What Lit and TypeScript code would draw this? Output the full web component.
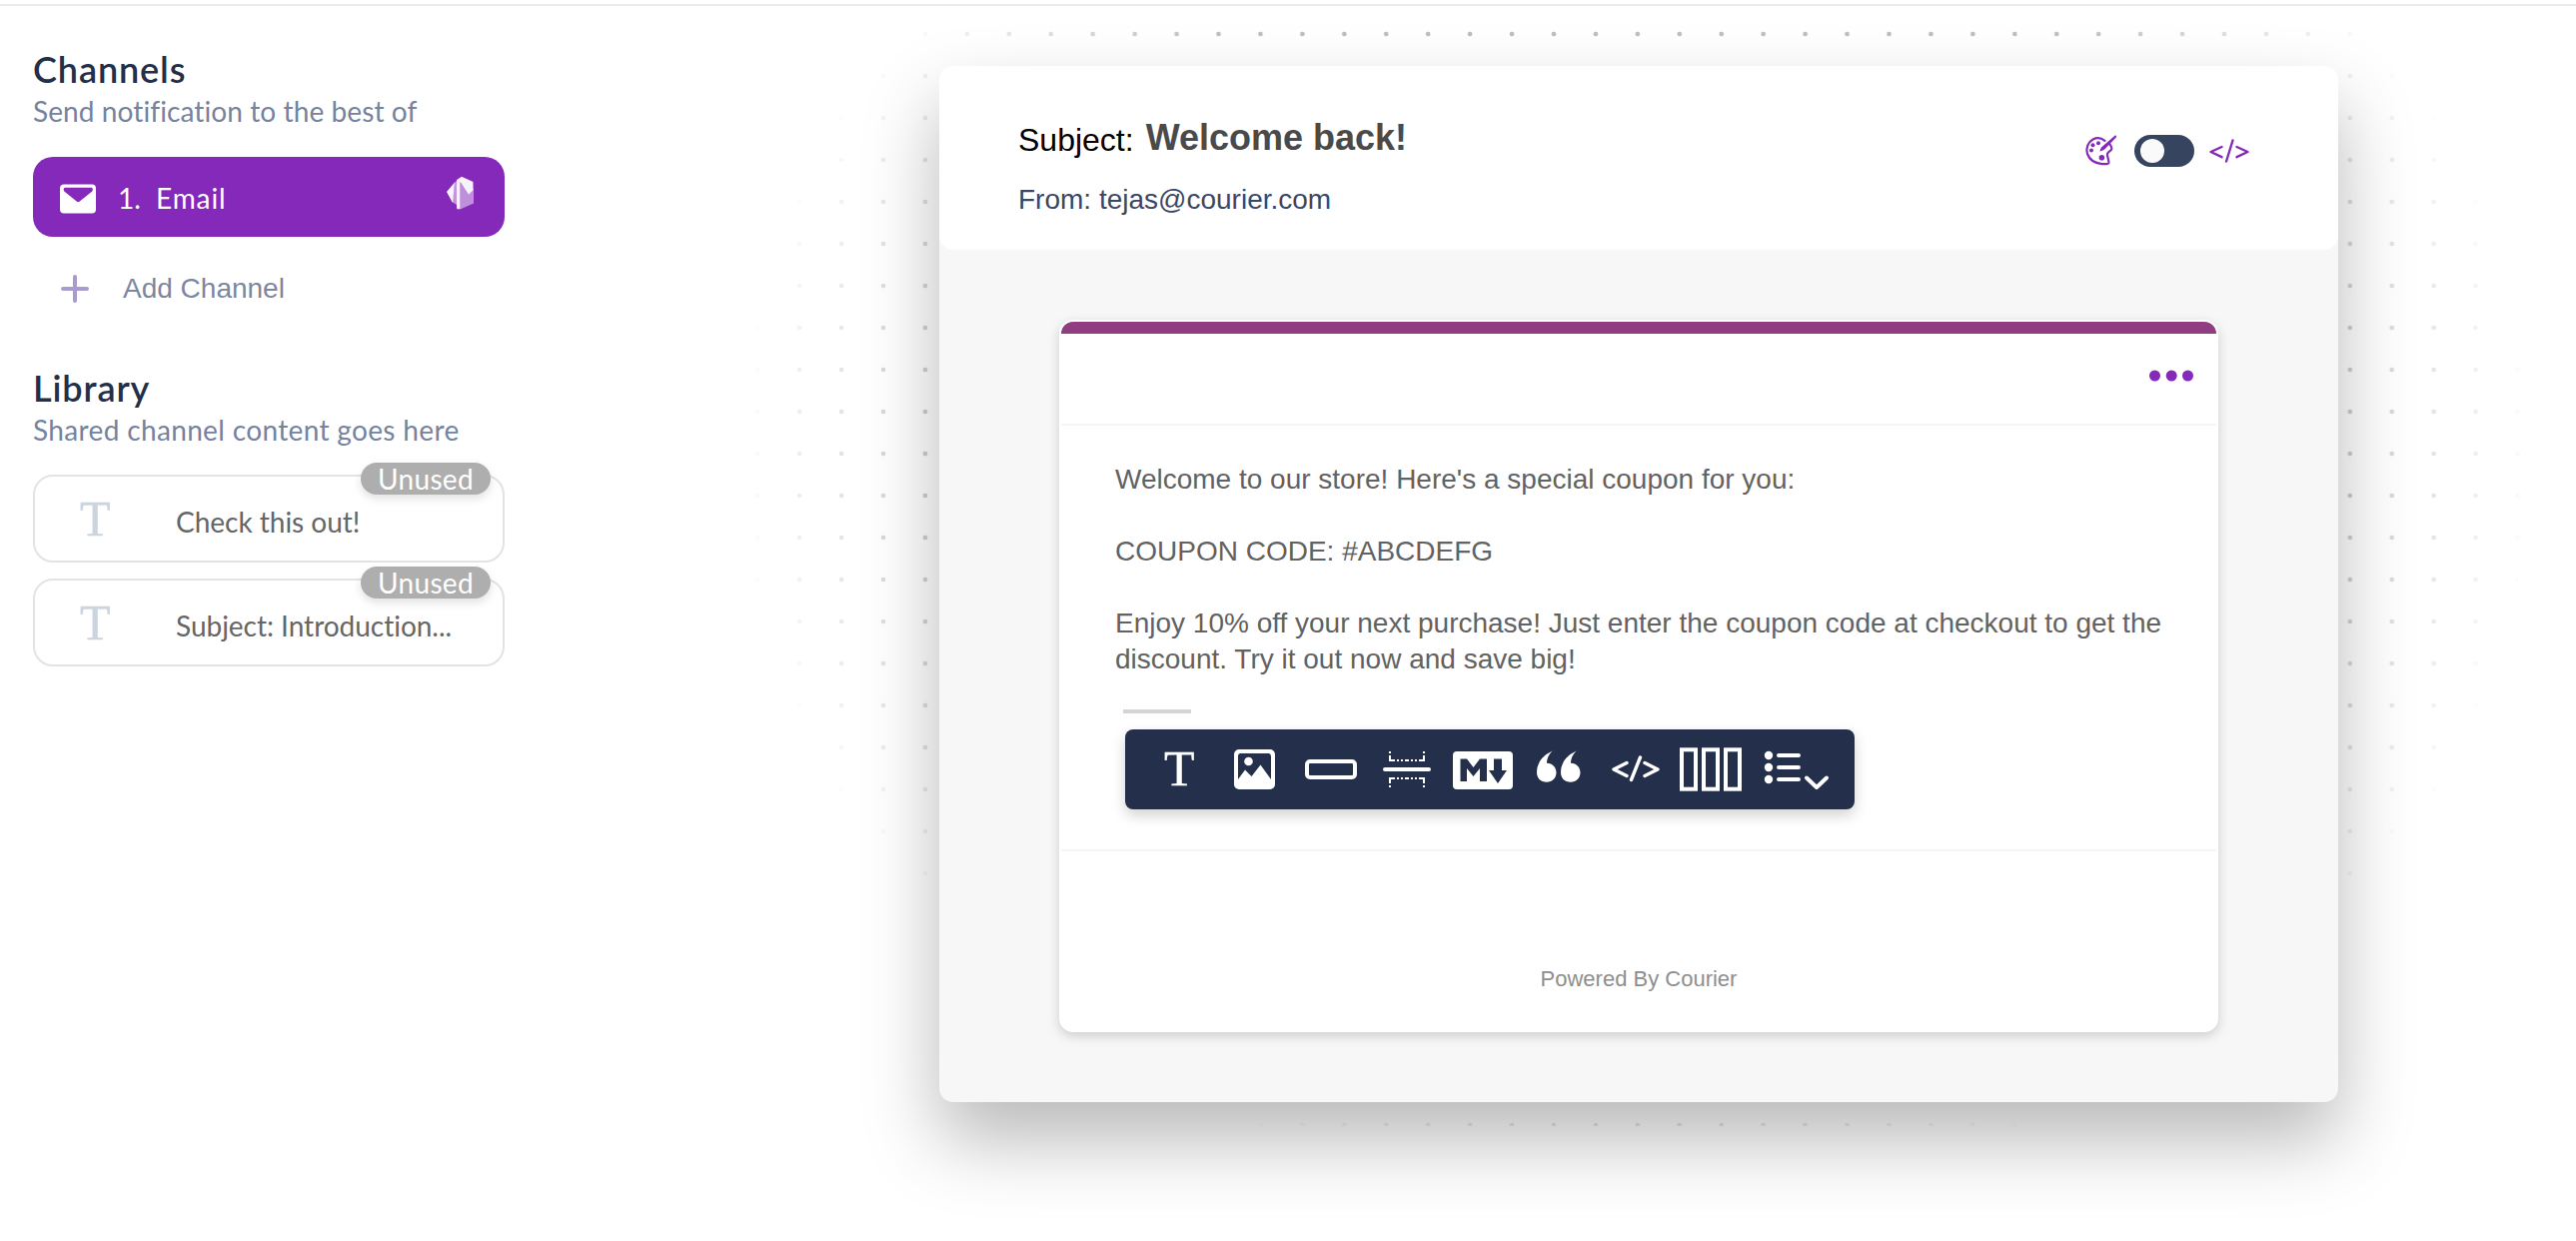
import { LitElement, html, css, svg } from "lit";
import { customElement, property } from "lit/decorators.js";

const SHAPES: Record<string, { w: number; h: number; body: unknown }> = {
  mail: {
    w: 38, h: 30,
    body: svg`<path fill-rule="evenodd" d="M4 .5h28a4 4 0 0 1 4 4v21a4 4 0 0 1-4 4H4a4 4 0 0 1-4-4v-21a4 4 0 0 1 4-4Zm1.500 3.200c-2 0-2.400 2.200-1.200 3.700L16.700 17.600q1.500 1.200 3 0L32.200 7.400c1.200-1.500.8-3.700-1.200-3.700Z"/>`,
  },
  gem: {
    w: 30, h: 34,
    body: svg`<path d="M9 6.500 1 16l6 11Z" opacity=".95"/><path d="M9 6.500 11 5v24L6.500 26Z" opacity=".5"/><path d="M11 4 16 .8 27.500 6v8l-4.500 5L14.500 6v27.200h-3l-.5-1.200Z" opacity=".94"/><path d="M14.500 6.500 23 19l5-7v15.500l-13.500 6Z" opacity=".48"/>`,
  },
  plus: {
    w: 28, h: 28,
    body: svg`<path d="M14 2v24M2 14h24" fill="none" stroke="currentColor" stroke-width="4" stroke-linecap="round"/>`,
  },
  palette: {
    w: 32, h: 32,
    body: svg`<path d="M19.500 5.800C16 3 11.500 2.500 7.500 4.500 2.500 7.300.3 13.500 2 19c2.200 6 7.800 9 13.300 9.800 3 .4 7.500.9 8.100-1 .6-2.200-2.100-6-1.300-9 .6-2.200 4.200-2.700 4.300-5 .1-1.500-.9-3-2.100-4.600" fill="none" stroke="currentColor" stroke-width="2.200" stroke-linecap="round"/><circle cx="7.500" cy="10.300" r="2"/><circle cx="13" cy="8.300" r="2"/><circle cx="6" cy="15.400" r="2"/><circle cx="16.400" cy="22.800" r="2.800"/><path d="M30.700.800c.6.700.4 1.500-.1 2L19.700 14c-1.300 1.300-3 2-5.200 2.400.3-1.900 1-3.600 2.600-4.900L29.200 1c.5-.4 1-.6 1.500-.2Z"/>`,
  },
  codeSmall: {
    w: 40, h: 24,
    body: svg`<path d="m12.500 8-11 5L12.500 18.200M27.500 8l11 5-11 5.200M23.500 1.500l-6.500 21" fill="none" stroke="currentColor" stroke-width="2.400" stroke-linecap="round" stroke-linejoin="round"/>`,
  },
  more: {
    w: 44, h: 12,
    body: svg`<circle cx="5.500" cy="6" r="5.500"/><circle cx="22.200" cy="6" r="5.500"/><circle cx="38.500" cy="6" r="5.500"/>`,
  },
  image: {
    w: 41, h: 40,
    body: svg`<path fill-rule="evenodd" d="M5 0h31a5 5 0 0 1 5 5v30a5 5 0 0 1-5 5H5a5 5 0 0 1-5-5V5a5 5 0 0 1 5-5Zm1.500 4Q4 4 4 7v23l7-9.500L17.500 27 26.500 15.500 37 30V7q0-3-2.500-3Z"/><circle cx="14.500" cy="12" r="4.300"/>`,
  },
  button: {
    w: 52, h: 20,
    body: svg`<rect x="2" y="2" width="48" height="16" rx="3" fill="none" stroke="currentColor" stroke-width="4"/>`,
  },
  spacer: {
    w: 48, h: 36,
    body: svg`<path d="M2 18h44" stroke="currentColor" stroke-width="4" stroke-linecap="round"/><path d="M7 0v2M7 4v6M41 0v2M41 4v6M6 9h6M14 9h2M18 9h2M22 9h4M28 9h2M32 9h2M36 9h6M7 26v6M7 34v2M41 26v6M41 34v2M6 27h6M14 27h2M18 27h2M22 27h4M28 27h2M32 27h2M36 27h6" fill="none" stroke="currentColor" stroke-width="2"/>`,
  },
  markdown: {
    w: 60, h: 38,
    body: svg`<path fill-rule="evenodd" d="M4 0h52a4 4 0 0 1 4 4v30a4 4 0 0 1-4 4H4a4 4 0 0 1-4-4V4a4 4 0 0 1 4-4ZM7.500 7.500V30h6.500V17l6.500 8 6.500-8v13h7V7.500h-7L20.500 16 14 7.500ZM41 7.500V19h-5l9 13 9-13h-5V7.500Z"/>`,
  },
  quote: {
    w: 44, h: 32,
    body: svg`<path d="M16 .5C5 5 0 13.500 0 22c0 6 4.200 9.800 9.800 9.800 5.500 0 9.700-4 9.700-9.500 0-5.800-4.500-9.700-9.500-9.500C10 8 12.500 3 16 .500ZM40 .5C29 5 24 13.500 24 22c0 6 4.200 9.800 9.800 9.800 5.500 0 9.700-4 9.700-9.500 0-5.800-4.500-9.700-9.500-9.500C34 8 36.500 3 40 .5Z"/>`,
  },
  code: {
    w: 50, h: 28,
    body: svg`<path d="M15 8.500 2 15l13 6.500M33 8.500 46 15l-13 6.500M28.500 3 19.500 25.500" fill="none" stroke="currentColor" stroke-width="3.400" stroke-linecap="round" stroke-linejoin="round"/>`,
  },
  columns: {
    w: 62, h: 44,
    body: svg`<g fill="none" stroke="currentColor" stroke-width="4"><rect x="2" y="2.300" width="14" height="39.400"/><rect x="24" y="2.300" width="14" height="39.400"/><rect x="46" y="2.300" width="14" height="39.400"/></g>`,
  },
  list: {
    w: 64, h: 40,
    body: svg`<circle cx="3" cy="5" r="4.200"/><circle cx="3" cy="17" r="4.200"/><circle cx="3" cy="29" r="4.200"/><path d="M13 5h20M13 17h20M13 29h20" stroke="currentColor" stroke-width="4" stroke-linecap="round"/><path d="m41 27.500 10 9.500 10-9.500" fill="none" stroke="currentColor" stroke-width="4" stroke-linecap="round" stroke-linejoin="round"/>`,
  },
};

@customElement("ui-icon")
class UiIcon extends LitElement {
  @property() name = "mail";
  static styles = css`
    :host { display: block; flex: none; }
    .glyph { display: block; fill: currentColor; overflow: visible; }
  `;
  render() {
    const s = SHAPES[this.name];
    return html`<svg class="glyph" width=${s.w} height=${s.h} viewBox="0 0 ${s.w} ${s.h}" aria-hidden="true">${s.body}</svg>`;
  }
}

@customElement("library-item")
class LibraryItem extends LitElement {
  @property() label = "";
  static styles = css`
    :host { display: block; }
    .item {
      position: relative; box-sizing: border-box; height: 88px; display: flex; align-items: center;
      border: 2px solid #e3e3e3; border-radius: 20px; padding-left: 45px; color: #666;
      font-family: Lato, "Open Sans", sans-serif; font-size: 28px;
    }
    .letter {
      width: 96px; font: 50px/56px "Liberation Serif", serif; color: #ccd5df; padding-bottom: 1px;
      -webkit-text-stroke: 0.5px #ccd5df;
    }
    .label { line-height: 40px; padding-top: 6px; letter-spacing: -0.02px; }
    .badge {
      position: absolute; top: -14px; right: 12px; width: 130px; height: 32px; border-radius: 16px;
      background: #aeaeae; color: #fff; text-align: center; line-height: 33px; letter-spacing: 0.3px;
      box-shadow: 0 4px 8px rgba(0, 0, 0, 0.12);
    }
  `;
  render() {
    return html`<div class="item">
      <span class="letter">T</span><span class="label">${this.label}</span><span class="badge">Unused</span>
    </div>`;
  }
}

@customElement("side-panel")
class SidePanel extends LitElement {
  static styles = css`
    :host { display: block; font-family: Lato, "Open Sans", sans-serif; font-size: 28px; }
    .panel { width: 472px; padding: 41px 0 0 33px; }
    .title { margin: 0; font-size: 36px; font-weight: 600; line-height: 44px; color: #243049; letter-spacing: 0.9px; }
    .sub { line-height: 40px; color: #76839f; white-space: nowrap; letter-spacing: 0.35px; }
    .sub.tight { letter-spacing: 0.1px; }
    .email {
      display: flex; align-items: center; box-sizing: border-box; height: 80px; margin-top: 26px; padding: 4px 29px 0 27px;
      border-radius: 20px; background: #8529ba; color: #fff;
    }
    .number { margin-left: 20px; width: 38px; padding-bottom: 3px; }
    .name { letter-spacing: 0.9px; padding-bottom: 3px; }
    .gem { margin: -12px 0 0 auto; }
    .add {
      display: flex; align-items: center; height: 104px; padding-left: 28px; gap: 34px;
      font-family: "Liberation Sans", Arial, sans-serif; color: #7d87a1;
    }
    .plus { color: #a99ccd; }
    .library { margin-top: 25px; }
    .items { display: grid; gap: 16px; margin-top: 25px; }
  `;
  render() {
    return html`<aside class="panel">
      <h2 class="title">Channels</h2>
      <div class="sub tight">Send notification to the best of</div>
      <div class="email">
        <ui-icon name="mail"></ui-icon>
        <span class="number">1.</span><span class="name">Email</span>
        <ui-icon class="gem" name="gem"></ui-icon>
      </div>
      <div class="add"><ui-icon class="plus" name="plus"></ui-icon><span>Add Channel</span></div>
      <section class="library">
        <h2 class="title">Library</h2>
        <div class="sub">Shared channel content goes here</div>
        <div class="items">
          <library-item label="Check this out!"></library-item>
          <library-item label="Subject: Introduction..."></library-item>
        </div>
      </section>
    </aside>`;
  }
}

@customElement("block-toolbar")
class BlockToolbar extends LitElement {
  static styles = css`
    :host { display: block; }
    .bar {
      box-sizing: border-box; width: 730px; height: 80px; border-radius: 8px; background: #24304b; color: #fff;
      display: grid; grid-template-columns: 69px 71px 78px 70px 84px 74.500px 68.500px 86px auto;
      align-items: center; padding-left: 40px; box-shadow: 0 6px 14px rgba(0, 0, 0, 0.18);
    }
    .letter { font: 50px/56px "Liberation Serif", serif; margin-left: -1px; padding-bottom: 2px; -webkit-text-stroke: 0.3px #fff; }
    .md { margin-top: 2px; }
    .quote { margin-top: -7px; }
    .code { margin-top: -2px; }
    .list { margin-top: 1px; }
  `;
  render() {
    return html`<div class="bar">
      <span class="letter">T</span>
      <ui-icon name="image"></ui-icon>
      <ui-icon name="button"></ui-icon>
      <ui-icon name="spacer"></ui-icon>
      <ui-icon class="md" name="markdown"></ui-icon>
      <ui-icon class="quote" name="quote"></ui-icon>
      <ui-icon class="code" name="code"></ui-icon>
      <ui-icon name="columns"></ui-icon>
      <ui-icon class="list" name="list"></ui-icon>
    </div>`;
  }
}

@customElement("email-preview")
class EmailPreview extends LitElement {
  static styles = css`
    :host { display: block; font-family: "Liberation Sans", Arial, sans-serif; font-size: 28px; }
    .sheet {
      box-sizing: border-box; width: 1400px; height: 1037px; border-radius: 14px; background: #f7f7f7;
      box-shadow: 0 38px 76px rgba(0, 0, 0, 0.28);
    }
    .head {
      box-sizing: border-box; height: 184px; border-radius: 14px; background: #fff;
      display: flex; justify-content: space-between; padding: 50px 89px 0 79px;
    }
    .subject { display: flex; align-items: baseline; gap: 12px; height: 45px; line-height: 45px; font-size: 32px; color: #000; }
    .value { font-size: 36px; font-weight: 700; color: #4a4a4a; position: relative; top: -1px; }
    .from { margin-top: 19px; line-height: 40px; color: #3a4867; }
    .tools { display: flex; align-items: center; height: 70px; color: #8529ba; }
    .toggle {
      box-sizing: border-box; width: 60px; height: 32px; margin: 0 15px 0 17px; padding: 4px 6px;
      border-radius: 16px; background: #36445f;
    }
    .knob { width: 24px; height: 24px; border-radius: 50%; background: #fafafa; }
    .card {
      box-sizing: border-box; width: 1160px; height: 713px; margin: 70px auto 0; border: 2px solid #fff;
      border-radius: 14px; background: #fff; box-shadow: 0 4px 12px rgba(0, 0, 0, 0.17);
    }
    .stripe { height: 12px; border-radius: 12px 12px 0 0; background: #903d82; }
    .menu {
      box-sizing: border-box; height: 92px; padding: 36px 23px 0 0; display: flex; justify-content: flex-end;
      border-bottom: 2px solid #f5f5f5; color: #8529ba;
    }
    .body { box-sizing: border-box; height: 426px; padding: 36px 54px 0; border-bottom: 2px solid #f5f5f5; color: #626262; }
    .para { margin: 0 0 36px; line-height: 36px; white-space: pre-line; }
    .para.last { margin: 0; }
    .mark { width: 68px; height: 4px; margin: 32px 0 16px 8px; background: #d4d4d4; }
    .bar { margin-left: 10px; }
    .foot { padding-top: 112px; text-align: center; font-size: 22px; line-height: 32px; color: #8e8e8e; }
  `;
  render() {
    return html`<div class="sheet">
      <header class="head">
        <div>
          <div class="subject"><span>Subject:</span><span class="value">Welcome back!</span></div>
          <div class="from">From: tejas@courier.com</div>
        </div>
        <div class="tools">
          <ui-icon name="palette"></ui-icon>
          <div class="toggle"><div class="knob"></div></div>
          <ui-icon name="codeSmall"></ui-icon>
        </div>
      </header>
      <main class="card">
        <div class="stripe"></div>
        <div class="menu"><ui-icon name="more"></ui-icon></div>
        <div class="body">
          <p class="para">Welcome to our store! Here's a special coupon for you:</p>
          <p class="para">COUPON CODE: #ABCDEFG</p>
          <p class="para last">${"Enjoy 10% off your next purchase! Just enter the coupon code at checkout to get the\ndiscount. Try it out now and save big!"}</p>
          <div class="mark"></div>
          <block-toolbar class="bar"></block-toolbar>
        </div>
        <div class="foot">Powered By Courier</div>
      </main>
    </div>`;
  }
}

@customElement("app-root")
class AppRoot extends LitElement {
  static styles = css`
    :host { display: block; }
    .page {
      position: relative; box-sizing: border-box; width: 2578px; height: 1242px; padding-top: 4px;
      overflow: hidden; background: #fff;
    }
    .rule { height: 2px; background: #e9ecf0; }
    .layout { display: flex; height: 1236px; }
    .nav { flex: none; width: 702px; }
    .canvas { position: relative; flex: 1; display: flex; padding: 60px 0 0 238px; }
    .dots {
      position: absolute; inset: 0 0 115px;
      background-image: radial-gradient(circle at 21px 21px, #bebebe 2px, transparent 2.700px);
      background-size: 41.950px 42px; background-position: 35.200px 7px;
      mask-image: radial-gradient(885px 735px at 937px 450px, #000 74%, transparent 102%);
    }
    .preview { position: relative; }
  `;
  render() {
    return html`<div class="page">
      <div class="rule"></div>
      <div class="layout">
        <side-panel class="nav"></side-panel>
        <div class="canvas">
          <div class="dots"></div>
          <email-preview class="preview"></email-preview>
        </div>
      </div>
    </div>`;
  }
}
